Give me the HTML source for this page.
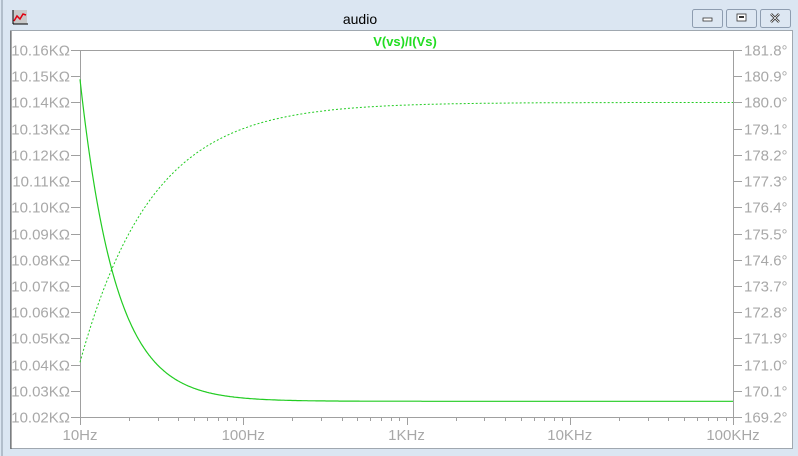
<!DOCTYPE html>
<html><head><meta charset="utf-8"><style>
body{margin:0;width:798px;height:456px;overflow:hidden;background:#dbe6f2;font-family:"Liberation Sans",sans-serif}
</style></head><body>
<svg width="798" height="456" xmlns="http://www.w3.org/2000/svg" style="position:absolute;left:0;top:0">
<rect x="0" y="0" width="798" height="456" fill="#dbe6f2"/>
<line x1="2" y1="0" x2="2" y2="456" stroke="#8a96a4"/>
<rect x="10.5" y="30.5" width="782" height="418" fill="#fff" stroke="#a0a8b0"/>
<line x1="11" y1="31" x2="11" y2="449" stroke="#555"/>
<rect x="13" y="10" width="14" height="14" fill="#c8c8c8"/>
<polyline points="14,21 17,16 20,19 23,14 26,15" fill="none" stroke="#e00010" stroke-width="1.5"/>
<line x1="13" y1="10" x2="13" y2="24" stroke="#000"/>
<line x1="13" y1="24" x2="28" y2="24" stroke="#000"/>
<text x="360" y="24" font-size="14" text-anchor="middle" fill="#000">audio</text>
<g fill="#dde7f2" stroke="#8e9db0">
<rect x="692.5" y="9.5" width="30" height="18" rx="2"/>
<rect x="726.5" y="9.5" width="30" height="18" rx="2"/>
<rect x="760.5" y="9.5" width="30" height="18" rx="2"/>
</g>
<rect x="703" y="18" width="9" height="3" fill="#fff" stroke="#333" stroke-width="0.8"/>
<rect x="737" y="14" width="9" height="7" fill="#fff" stroke="#333" stroke-width="0.8"/>
<rect x="739" y="16" width="5" height="2" fill="#333"/>
<path d="M771 14 L779 22 M779 14 L771 22" stroke="#333" stroke-width="2.5"/>
<path d="M771 14 L779 22 M779 14 L771 22" stroke="#fff" stroke-width="0.8"/>
<text x="405" y="46" font-size="13" font-weight="bold" text-anchor="middle" fill="#22dd22">V(vs)/I(Vs)</text>
<g id="ax" stroke="#a0a0a0" fill="none"></g>
<g id="lab" fill="#a8a8a8" font-size="15"></g>
<path id="mag" fill="none" stroke="#22cc22" stroke-width="1.2"/>
<path id="ph" fill="none" stroke="#22cc22" stroke-width="1" stroke-dasharray="2,2"/>
</svg>
<script>
var ns="http://www.w3.org/2000/svg";
var X0=80,X1=733,Y0=50,Y1=417,dy=(Y1-Y0)/14,dx=(X1-X0)/4;
var ax=document.getElementById('ax'),lab=document.getElementById('lab');
function ln(a,b,c,d){var l=document.createElementNS(ns,'line');l.setAttribute('x1',a);l.setAttribute('y1',b);l.setAttribute('x2',c);l.setAttribute('y2',d);ax.appendChild(l);}
function tx(x,y,s,anc){var t=document.createElementNS(ns,'text');t.setAttribute('x',x);t.setAttribute('y',y);t.setAttribute('text-anchor',anc);t.textContent=s;lab.appendChild(t);}
ln(X0+.5,Y0,X0+.5,Y1);ln(X1+.5,Y0,X1+.5,Y1);ln(X0,Y0+.5,X1,Y0+.5);ln(X0,Y1+.5,X1,Y1+.5);
for(var i=0;i<=14;i++){var y=Math.round(Y0+i*dy)+.5;ln(71,y,X0,y);ln(X1,y,X1+9,y);
tx(70,y+5,(10.16-i*0.01).toFixed(2)+"KΩ","end");tx(744,y+5,(181.8-i*0.9).toFixed(1)+"°","start");}
var fl=["10Hz","100Hz","1KHz","10KHz","100KHz"];
for(var d=0;d<=4;d++){var x=X0+d*dx;ln(Math.round(x)+.5,Y1,Math.round(x)+.5,Y1+8);tx(x,Y1+23,fl[d],"middle");
if(d<4)for(var k=2;k<10;k++){var xx=Math.round(x+Math.log10(k)*dx)+.5;ln(xx,Y1,xx,Y1+4);}}
var m="",p="";var R=10.026;
for(var x=X0;x<=X1;x++){var f=10*Math.pow(10,(x-X0)/dx);var r=0.157*10/f;
var mag=R*Math.sqrt(1+r*r);var ph=180-Math.atan(r)*180/Math.PI;
var ym=Y0+(10.16-mag)/0.01*dy,yp=Y0+(181.8-ph)/0.9*dy;
m+=(x==X0?"M":"L")+x+" "+ym.toFixed(1);p+=(x==X0?"M":"L")+x+" "+yp.toFixed(1);}
document.getElementById('mag').setAttribute('d',m);document.getElementById('ph').setAttribute('d',p);
</script>
</body></html>
